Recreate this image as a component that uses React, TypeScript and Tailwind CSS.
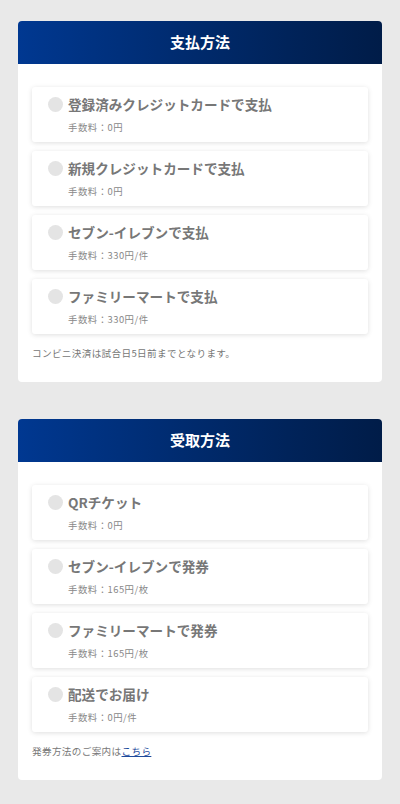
const font = { fontFamily: '"Noto Sans CJK JP", "Noto Sans", sans-serif' };

interface Option {
  label: string;
  fee: string;
}

const payOptions: Option[] = [
  { label: '登録済みクレジットカードで支払', fee: '手数料：0円' },
  { label: '新規クレジットカードで支払', fee: '手数料：0円' },
  { label: 'セブン-イレブンで支払', fee: '手数料：330円/件' },
  { label: 'ファミリーマートで支払', fee: '手数料：330円/件' },
];

const receiveOptions: Option[] = [
  { label: 'QRチケット', fee: '手数料：0円' },
  { label: 'セブン-イレブンで発券', fee: '手数料：165円/枚' },
  { label: 'ファミリーマートで発券', fee: '手数料：165円/枚' },
  { label: '配送でお届け', fee: '手数料：0円/件' },
];

function OptionCard({ option }: { option: Option }) {
  return (
    <div className="h-[55px] rounded-[3px] bg-white pl-4 pt-2 shadow-[0_1px_5px_rgba(0,0,0,0.13)]">
      <div className="flex h-[18px] items-center gap-[5px]">
        <div className="h-[15px] w-[15px] shrink-0 rounded-full bg-[#e4e4e4]" />
        <span className="text-[13.6px] font-bold leading-[18px] text-[#777]">{option.label}</span>
      </div>
      <div className="mt-[7px] pl-[20px] text-[9.4px] leading-[14px] tracking-[0.5px] text-[#888]">
        {option.fee}
      </div>
    </div>
  );
}

function Section({
  title,
  options,
  children,
}: {
  title: string;
  options: Option[];
  children: React.ReactNode;
}) {
  return (
    <div className="overflow-hidden rounded-[4px] bg-white">
      <div className="flex h-[43px] items-center justify-center bg-gradient-to-r from-[#003891] to-[#001c48]">
        <h2 className="text-[15px] font-bold text-white">{title}</h2>
      </div>
      <div className="px-[14px] pb-[22px] pt-[23px]">
        <div className="flex flex-col gap-[9px]">
          {options.map((o) => (
            <OptionCard key={o.label} option={o} />
          ))}
        </div>
        <p className="mt-[12px] text-[9.6px] leading-[14px] tracking-[0.35px] text-[#777]">{children}</p>
      </div>
    </div>
  );
}

export default function App() {
  return (
    <div className="min-h-[804px] bg-[#e9e9e9] px-[18px] pt-[21px]" style={font}>
      <div className="flex flex-col gap-[37px]">
        <Section title="支払方法" options={payOptions}>
          コンビニ決済は試合日5日前までとなります。
        </Section>
        <Section title="受取方法" options={receiveOptions}>
          発券方法のご案内は
          <a href="#" className="text-[#1d4a9c] underline">
            こちら
          </a>
        </Section>
      </div>
    </div>
  );
}
